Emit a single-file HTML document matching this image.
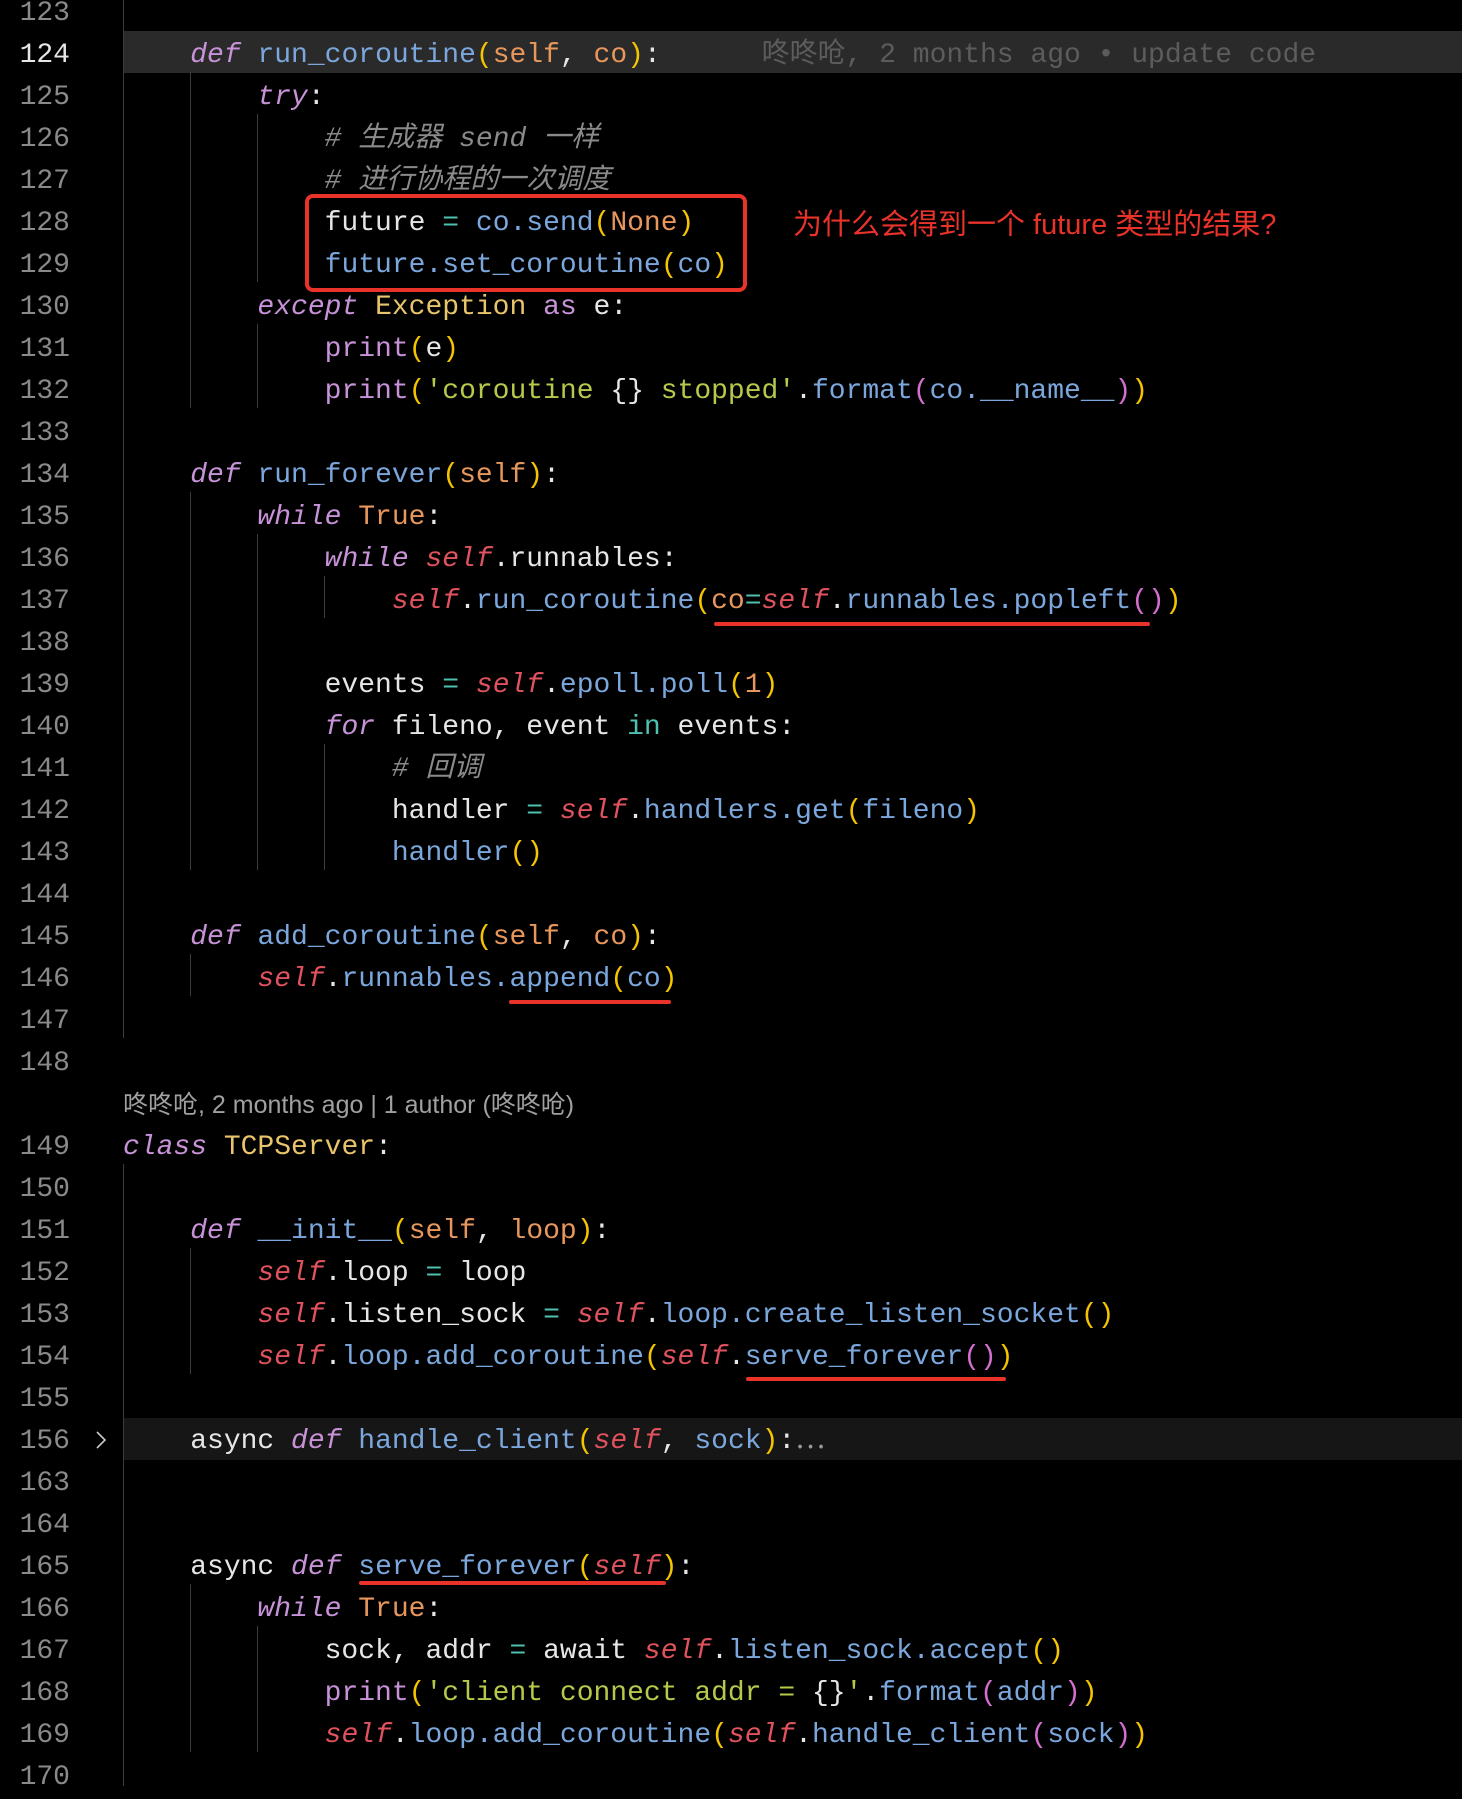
<!DOCTYPE html>
<html><head><meta charset="utf-8">
<style>
html,body{margin:0;padding:0;background:#000;}
body{width:1462px;height:1786px;position:relative;overflow:hidden;font-family:"Liberation Mono","Noto Sans CJK SC",monospace;font-size:28px;}
.r{position:absolute;left:0;width:1462px;height:42px;line-height:42px;white-space:pre;transform:translateY(5px);}
.n{position:absolute;left:0;width:70px;text-align:right;color:#8a8a8a;}
.c{position:absolute;left:123px;color:#e6e6e6;}
.hl{position:absolute;left:123px;right:0;height:42px;}
.g{position:absolute;width:1px;background:#3c3c3c;}
.k{color:#c792d8;font-style:italic}
.kn{color:#c792d8}
.f{color:#7ba7dc}
.p{color:#e8975c}
.y{color:#f5c400}
.m{color:#d46fd0}
.s{color:#e0525e;font-style:italic}
.o{color:#4fc1b0}
.cm{color:#8a8a8a;font-style:italic}
.t{color:#e8c46a}
.tr{color:#e8975c}
.st{color:#b8c84a}
.red{position:absolute;background:#e8322a;border-radius:3px;height:4px;}
</style></head><body>

<div class="hl" style="top:31px;background:#2a2a2a"></div>
<div class="hl" style="top:1418px;background:#161616"></div>

<div class="g" style="left:123px;top:0;height:1038px"></div>
<div class="g" style="left:123px;top:1164px;height:622px"></div>
<div class="g" style="left:190px;top:72px;height:336px"></div>
<div class="g" style="left:190px;top:492px;height:378px"></div>
<div class="g" style="left:190px;top:954px;height:42px"></div>
<div class="g" style="left:190px;top:1248px;height:126px"></div>
<div class="g" style="left:190px;top:1584px;height:168px"></div>
<div class="g" style="left:257px;top:114px;height:168px"></div>
<div class="g" style="left:257px;top:324px;height:84px"></div>
<div class="g" style="left:257px;top:534px;height:336px"></div>
<div class="g" style="left:257px;top:1626px;height:126px"></div>
<div class="g" style="left:324px;top:576px;height:42px"></div>
<div class="g" style="left:324px;top:744px;height:126px"></div>

<div class="r" style="top:-12px"><span class="n">123</span></div>
<div class="r" style="top:30px"><span class="n" style="color:#e6e6e6">124</span><span class="c">    <span class="k">def</span> <span class="f">run_coroutine</span><span class="y">(</span><span class="p">self</span>, <span class="p">co</span><span class="y">)</span>:      <span style="color:#5c5c5c">咚咚呛, 2 months ago • update code</span></span></div>
<div class="r" style="top:72px"><span class="n">125</span><span class="c">        <span class="k">try</span>:</span></div>
<div class="r" style="top:114px"><span class="n">126</span><span class="c">            <span class="cm"># 生成器 send 一样</span></span></div>
<div class="r" style="top:156px"><span class="n">127</span><span class="c">            <span class="cm"># 进行协程的一次调度</span></span></div>
<div class="r" style="top:198px"><span class="n">128</span><span class="c">            future <span class="o">=</span> <span class="f">co.send</span><span class="y">(</span><span class="p">None</span><span class="y">)</span></span></div>
<div class="r" style="top:240px"><span class="n">129</span><span class="c">            <span class="f">future.set_coroutine</span><span class="y">(</span><span class="f">co</span><span class="y">)</span></span></div>
<div class="r" style="top:282px"><span class="n">130</span><span class="c">        <span class="k">except</span> <span class="t">Exception</span> <span class="kn">as</span> e:</span></div>
<div class="r" style="top:324px"><span class="n">131</span><span class="c">            <span class="kn">print</span><span class="y">(</span>e<span class="y">)</span></span></div>
<div class="r" style="top:366px"><span class="n">132</span><span class="c">            <span class="kn">print</span><span class="y">(</span><span class="st">'coroutine </span>{}<span class="st"> stopped'</span>.<span class="f">format</span><span class="m">(</span><span class="f">co.__name__</span><span class="m">)</span><span class="y">)</span></span></div>
<div class="r" style="top:408px"><span class="n">133</span></div>
<div class="r" style="top:450px"><span class="n">134</span><span class="c">    <span class="k">def</span> <span class="f">run_forever</span><span class="y">(</span><span class="p">self</span><span class="y">)</span>:</span></div>
<div class="r" style="top:492px"><span class="n">135</span><span class="c">        <span class="k">while</span> <span class="tr">True</span>:</span></div>
<div class="r" style="top:534px"><span class="n">136</span><span class="c">            <span class="k">while</span> <span class="s">self</span>.runnables:</span></div>
<div class="r" style="top:576px"><span class="n">137</span><span class="c">                <span class="s">self</span>.<span class="f">run_coroutine</span><span class="y">(</span><span class="p">co</span><span class="o">=</span><span class="s">self</span>.<span class="f">runnables.popleft</span><span class="m">()</span><span class="y">)</span></span></div>
<div class="r" style="top:618px"><span class="n">138</span></div>
<div class="r" style="top:660px"><span class="n">139</span><span class="c">            events <span class="o">=</span> <span class="s">self</span>.<span class="f">epoll.poll</span><span class="y">(</span><span class="p">1</span><span class="y">)</span></span></div>
<div class="r" style="top:702px"><span class="n">140</span><span class="c">            <span class="k">for</span> fileno, event <span class="o">in</span> events:</span></div>
<div class="r" style="top:744px"><span class="n">141</span><span class="c">                <span class="cm"># 回调</span></span></div>
<div class="r" style="top:786px"><span class="n">142</span><span class="c">                handler <span class="o">=</span> <span class="s">self</span>.<span class="f">handlers.get</span><span class="y">(</span><span class="f">fileno</span><span class="y">)</span></span></div>
<div class="r" style="top:828px"><span class="n">143</span><span class="c">                <span class="f">handler</span><span class="y">()</span></span></div>
<div class="r" style="top:870px"><span class="n">144</span></div>
<div class="r" style="top:912px"><span class="n">145</span><span class="c">    <span class="k">def</span> <span class="f">add_coroutine</span><span class="y">(</span><span class="p">self</span>, <span class="p">co</span><span class="y">)</span>:</span></div>
<div class="r" style="top:954px"><span class="n">146</span><span class="c">        <span class="s">self</span>.<span class="f">runnables.append</span><span class="y">(</span><span class="f">co</span><span class="y">)</span></span></div>
<div class="r" style="top:996px"><span class="n">147</span></div>
<div class="r" style="top:1038px"><span class="n">148</span></div>
<div style="position:absolute;top:1088px;left:123px;line-height:34px;white-space:pre;font-family:'Liberation Sans','Noto Sans CJK SC',sans-serif;font-size:25px;color:#a0a0a0">咚咚呛, 2 months ago | 1 author (咚咚呛)</div>
<div class="r" style="top:1122px"><span class="n">149</span><span class="c"><span class="k">class</span> <span class="t">TCPServer</span>:</span></div>
<div class="r" style="top:1164px"><span class="n">150</span></div>
<div class="r" style="top:1206px"><span class="n">151</span><span class="c">    <span class="k">def</span> <span class="f">__init__</span><span class="y">(</span><span class="p">self</span>, <span class="p">loop</span><span class="y">)</span>:</span></div>
<div class="r" style="top:1248px"><span class="n">152</span><span class="c">        <span class="s">self</span>.loop <span class="o">=</span> loop</span></div>
<div class="r" style="top:1290px"><span class="n">153</span><span class="c">        <span class="s">self</span>.listen_sock <span class="o">=</span> <span class="s">self</span>.<span class="f">loop.create_listen_socket</span><span class="y">()</span></span></div>
<div class="r" style="top:1332px"><span class="n">154</span><span class="c">        <span class="s">self</span>.<span class="f">loop.add_coroutine</span><span class="y">(</span><span class="s">self</span>.<span class="f">serve_forever</span><span class="m">()</span><span class="y">)</span></span></div>
<div class="r" style="top:1374px"><span class="n">155</span></div>
<div class="r" style="top:1416px"><span class="n">156</span><span class="c">    async <span class="k">def</span> <span class="f">handle_client</span><span class="y">(</span><span class="s">self</span>, <span class="f">sock</span><span class="y">)</span>:<span style="color:#999">⋯</span></span></div>
<svg style="position:absolute;left:94px;top:1429px" width="14" height="22" viewBox="0 0 14 22"><path d="M3 3 L11 11 L3 19" fill="none" stroke="#c8c8c8" stroke-width="1.6"/></svg>
<div class="r" style="top:1458px"><span class="n">163</span></div>
<div class="r" style="top:1500px"><span class="n">164</span></div>
<div class="r" style="top:1542px"><span class="n">165</span><span class="c">    async <span class="k">def</span> <span class="f">serve_forever</span><span class="y">(</span><span class="s">self</span><span class="y">)</span>:</span></div>
<div class="r" style="top:1584px"><span class="n">166</span><span class="c">        <span class="k">while</span> <span class="tr">True</span>:</span></div>
<div class="r" style="top:1626px"><span class="n">167</span><span class="c">            sock, addr <span class="o">=</span> await <span class="s">self</span>.<span class="f">listen_sock.accept</span><span class="y">()</span></span></div>
<div class="r" style="top:1668px"><span class="n">168</span><span class="c">            <span class="kn">print</span><span class="y">(</span><span class="st">'client connect addr = </span>{}<span class="st">'</span>.<span class="f">format</span><span class="m">(</span><span class="f">addr</span><span class="m">)</span><span class="y">)</span></span></div>
<div class="r" style="top:1710px"><span class="n">169</span><span class="c">            <span class="s">self</span>.<span class="f">loop.add_coroutine</span><span class="y">(</span><span class="s">self</span>.<span class="f">handle_client</span><span class="m">(</span><span class="f">sock</span><span class="m">)</span><span class="y">)</span></span></div>
<div class="r" style="top:1752px"><span class="n">170</span></div>

<div style="position:absolute;left:305px;top:194px;width:434px;height:90px;border:4px solid #e8322a;border-radius:8px"></div>
<div style="position:absolute;left:793px;top:207px;white-space:nowrap;color:#e8322a;font-family:'Liberation Sans','Noto Sans CJK SC',sans-serif;font-size:29px;line-height:36px">为什么会得到一个 future 类型的结果?</div>
<div class="red" style="left:714px;top:622px;width:436px"></div>
<div class="red" style="left:509px;top:1000px;width:162px"></div>
<div class="red" style="left:746px;top:1377px;width:260px"></div>
<div class="red" style="left:359px;top:1581px;width:307px"></div>
</body></html>
